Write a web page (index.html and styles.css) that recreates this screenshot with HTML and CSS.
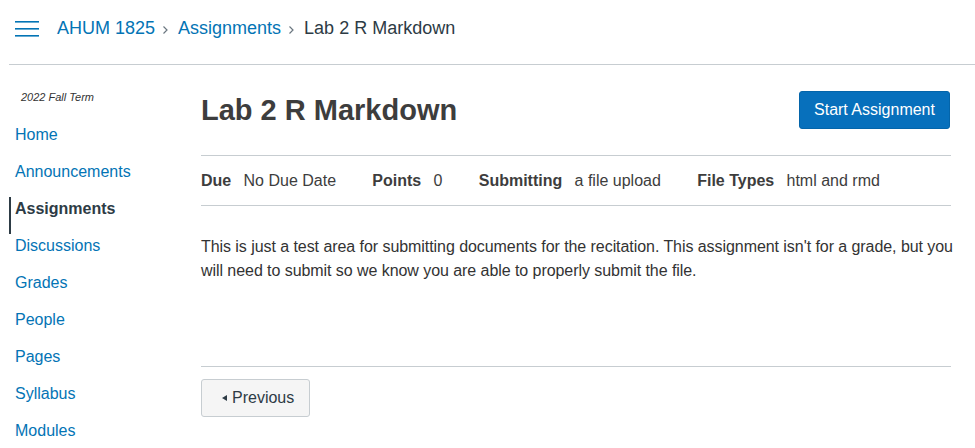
FILE: index.html
```html
<!DOCTYPE html>
<html>
<head>
<meta charset="utf-8">
<link rel="stylesheet" href="styles.css">
</head>
<body>
<header class="topbar">
  <button class="burger" aria-label="menu">
    <svg width="24" height="16" viewBox="0 0 24 16"><rect x="0" y="0" width="24" height="1.6" fill="#0374B5"/><rect x="0" y="7" width="24" height="1.6" fill="#0374B5"/><rect x="0" y="14" width="24" height="1.6" fill="#0374B5"/></svg>
  </button>
  <nav class="crumbs">
    <a href="#">AHUM 1825</a>
    <span class="sep"><svg width="7" height="10" viewBox="0 0 7 10"><path d="M1.5 1.5 L5 5 L1.5 8.5" fill="none" stroke="#6b7780" stroke-width="1.2"/></svg></span>
    <a href="#">Assignments</a>
    <span class="sep"><svg width="7" height="10" viewBox="0 0 7 10"><path d="M1.5 1.5 L5 5 L1.5 8.5" fill="none" stroke="#6b7780" stroke-width="1.2"/></svg></span>
    <span class="current">Lab 2 R Markdown</span>
  </nav>
</header>
<div class="layout">
  <aside class="sidebar">
    <div class="term">2022 Fall Term</div>
    <ul class="nav">
      <li><a href="#">Home</a></li>
      <li><a href="#">Announcements</a></li>
      <li class="active"><a href="#">Assignments</a></li>
      <li><a href="#">Discussions</a></li>
      <li><a href="#">Grades</a></li>
      <li><a href="#">People</a></li>
      <li><a href="#">Pages</a></li>
      <li><a href="#">Syllabus</a></li>
      <li><a href="#">Modules</a></li>
    </ul>
  </aside>
  <main class="content">
    <div class="title-row">
      <h1>Lab 2 R Markdown</h1>
      <button class="btn-primary">Start Assignment</button>
    </div>
    <div class="details">
      <div class="detail"><span class="label">Due</span><span>No Due Date</span></div>
      <div class="detail"><span class="label">Points</span><span>0</span></div>
      <div class="detail"><span class="label">Submitting</span><span>a file upload</span></div>
      <div class="detail"><span class="label">File Types</span><span>html and rmd</span></div>
    </div>
    <div class="description">
      <p>This is just a test area for submitting documents for the recitation. This assignment isn't for a grade, but you will need to submit so we know you are able to properly submit the file.</p>
    </div>
    <div class="footer-nav">
      <button class="btn-prev"><span class="tri"></span>Previous</button>
    </div>
  </main>
</div>
</body>
</html>
```
FILE: styles.css
```css
* { box-sizing: border-box; }
html, body { margin: 0; padding: 0; }
body {
  font-family: "Liberation Sans", Arial, sans-serif;
  color: #2d3b45;
  background: #fff;
  width: 975px;
  height: 448px;
  overflow: hidden;
}
a { color: #0374B5; text-decoration: none; }

.topbar {
  display: flex;
  align-items: center;
  height: 65px;
  margin-left: 9px;
  border-bottom: 1px solid #c7cdd1;
  padding-left: 6px;
}
.burger {
  border: 0;
  background: none;
  padding: 0;
  width: 24px;
  height: 16px;
  margin-top: -6px;
  display: block;
}
.burger svg { display: block; }
.crumbs {
  display: flex;
  align-items: center;
  margin-left: 18px;
  margin-top: -7px;
  font-size: 18px;
}
.crumbs .sep {
  display: inline-flex;
  margin: 0 9px 0 7px;
  padding-top: 3px;
}
.crumbs .current { color: #2d3b45; }

.layout {
  display: flex;
}
.sidebar {
  width: 201px;
  flex: none;
  padding-left: 9px;
  padding-top: 26px;
}
.term {
  font-size: 11px;
  font-style: italic;
  color: #333;
  padding-left: 12px;
  margin-bottom: 20px;
}
.nav {
  list-style: none;
  margin: 0;
  padding: 0;
}
.nav li {
  height: 37px;
  font-size: 16px;
  padding-left: 4px;
  border-left: 2px solid transparent;
  display: flex;
  align-items: flex-start;
  padding-top: 3px;
}
.nav li.active {
  border-left-color: #2d3b45;
}
.nav li.active a {
  color: #2d3b45;
  font-weight: bold;
}

.content {
  width: 750px;
  flex: none;
}
.title-row {
  display: flex;
  justify-content: space-between;
  align-items: flex-start;
  padding-top: 26px;
  height: 91px;
  border-bottom: 1px solid #c7cdd1;
}
h1 {
  margin: 0;
  font-size: 29px;
  font-weight: bold;
  color: #3d3d3d;
  line-height: 36px;
  padding-top: 1px;
}
.btn-primary {
  font-family: "Liberation Sans", Arial, sans-serif;
  background: #0770bc;
  color: #fff;
  border: 1px solid #0465aa;
  border-radius: 3px;
  font-size: 16px;
  height: 38px;
  width: 151px;
  padding: 0;
  margin-right: 1px;
}
.details {
  display: flex;
  gap: 36.3px;
  height: 50px;
  align-items: center;
  border-bottom: 1px solid #c7cdd1;
  font-size: 16px;
  color: #3d3d3d;
}
.detail .label {
  font-weight: bold;
  margin-right: 12.3px;
}
.description {
  height: 161px;
  border-bottom: 1px solid #c7cdd1;
  padding-top: 29px;
}
.description p {
  margin: 0 -12px 0 0;
  font-size: 16px;
  line-height: 24px;
  letter-spacing: -0.06px;
  color: #333;
}
.footer-nav {
  padding-top: 12px;
}
.btn-prev {
  font-family: "Liberation Sans", Arial, sans-serif;
  background: #f5f5f5;
  border: 1px solid #c7cdd1;
  border-radius: 3px;
  color: #2d3b45;
  font-size: 16px;
  height: 38px;
  width: 109px;
  padding: 0 0 0 20px;
  display: flex;
  align-items: center;
}
.tri {
  display: inline-block;
  width: 0;
  height: 0;
  border-top: 3.5px solid transparent;
  border-bottom: 3.5px solid transparent;
  border-right: 5px solid #2d3b45;
  margin-right: 5px;
}
```
